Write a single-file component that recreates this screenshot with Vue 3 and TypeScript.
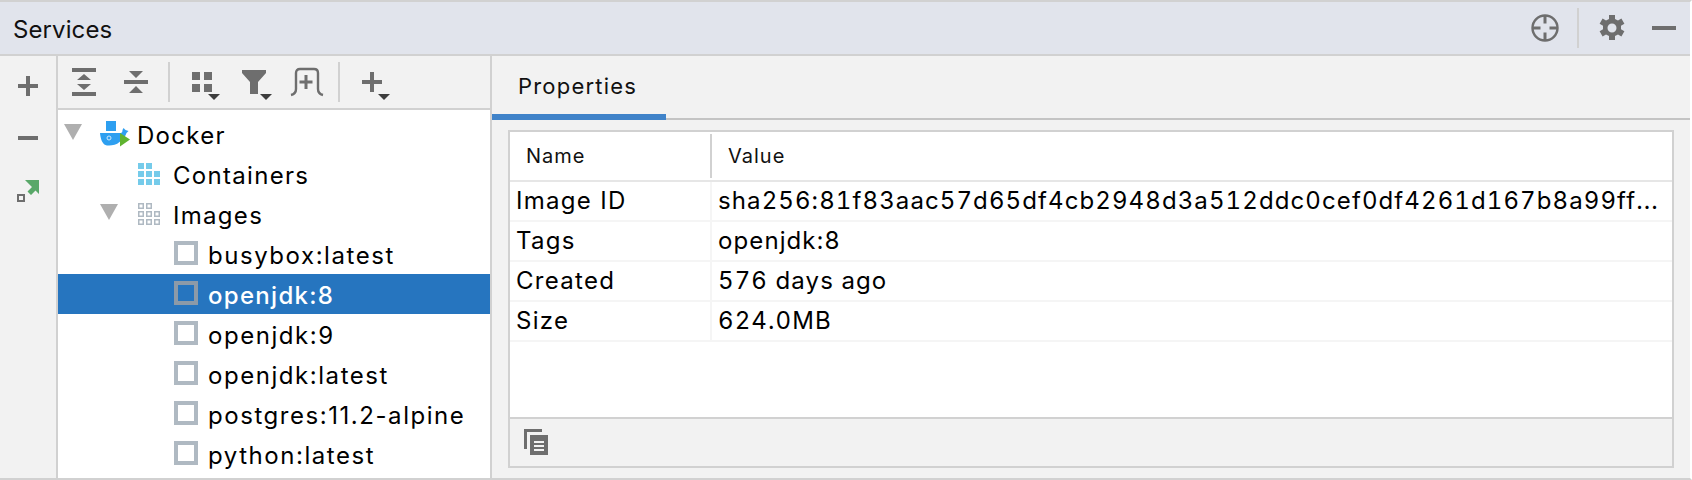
<script setup lang="ts">
const images = [
  { name: 'busybox:latest', selected: false },
  { name: 'openjdk:8', selected: true },
  { name: 'openjdk:9', selected: false },
  { name: 'openjdk:latest', selected: false },
  { name: 'postgres:11.2-alpine', selected: false },
  { name: 'python:latest', selected: false },
]
const props = [
  { k: 'Image ID', v: 'sha256:81f83aac57d65df4cb2948d3a512ddc0cef0df4261d167b8a99ff...' },
  { k: 'Tags', v: 'openjdk:8' },
  { k: 'Created', v: '576 days ago' },
  { k: 'Size', v: '624.0MB' },
]
const containerCells = [
  [0, 0], [8, 0], [0, 8], [8, 8], [16, 8], [0, 16], [8, 16], [16, 16],
]
</script>

<template>
  <div class="window">
    <header class="titlebar">
      <span class="title">Services</span>
      <div class="title-actions">
        <svg class="ta" width="28" height="28" viewBox="0 0 28 28">
          <circle cx="14" cy="14" r="12.5" fill="none" stroke="#6e6e6e" stroke-width="2.4" />
          <path d="M14 1.5v8M14 18.5v8M1.5 14h8M18.5 14h8" stroke="#6e6e6e" stroke-width="3" />
        </svg>
        <span class="title-sep"></span>
        <svg class="ta" width="26" height="28" viewBox="0 0 26 28">
          <path fill="#6e6e6e" fill-rule="evenodd" d="M10 1h6v4l3 1.6 3.4-2 3 5.2-3.4 2v3.4l3.4 2-3 5.2-3.4-2-3 1.6v4h-6v-4l-3-1.6-3.4 2-3-5.2 3.4-2v-3.4l-3.4-2 3-5.2 3.4 2 3-1.6zM13 9.500a4.500 4.500 0 1 0 0 9 4.500 4.500 0 0 0 0-9z" />
        </svg>
        <span class="min"></span>
      </div>
    </header>

    <div class="body">
      <aside class="rail">
        <svg width="20" height="20" viewBox="0 0 20 20"><path d="M8 0h4v8h8v4h-8v8H8v-8H0V8h8z" fill="#6e6e6e" /></svg>
        <svg width="20" height="4" viewBox="0 0 20 4"><rect width="20" height="4" fill="#6e6e6e" /></svg>
        <svg width="22" height="22" viewBox="0 0 22 22">
          <path d="M8 0h14v14l-3.500-3.500-4.500 4.500-3.500-3.500 4.500-4.500z" fill="#59a869" />
          <rect x="1" y="15" width="6" height="6" fill="none" stroke="#6e6e6e" stroke-width="2" />
        </svg>
      </aside>

      <section class="tree-pane">
        <div class="toolbar">
          <div class="tool-group first">
            <svg class="tool" width="32" height="40" viewBox="0 0 32 40">
              <g fill="#6e6e6e">
                <rect x="4" y="6" width="24" height="4" />
                <rect x="4" y="30" width="24" height="4" />
                <path d="M16 12l7 6H9zM16 28l-7-6h14z" />
              </g>
            </svg>
            <svg class="tool" width="32" height="40" viewBox="0 0 32 40">
              <g fill="#6e6e6e">
                <rect x="4" y="18" width="24" height="4" />
                <path d="M16 16l-7-7h14zM16 24l7 7H9z" />
              </g>
            </svg>
          </div>
          <span class="sep"></span>
          <div class="tool-group second">
            <svg class="tool" width="36" height="40" viewBox="0 0 36 40">
              <g fill="#6e6e6e">
                <rect x="4" y="10" width="8" height="8" /><rect x="16" y="10" width="8" height="8" />
                <rect x="4" y="22" width="8" height="8" /><rect x="16" y="22" width="8" height="8" />
              </g>
              <path d="M20 32h12l-6 6z" fill="#3d3d3d" />
            </svg>
            <svg class="tool" width="36" height="40" viewBox="0 0 36 40">
              <path d="M4 8h24v3l-8 9v12h-8V20L4 11z" fill="#6e6e6e" />
              <path d="M22 32h12l-6 6z" fill="#3d3d3d" />
            </svg>
            <svg class="tool" width="34" height="40" viewBox="0 0 34 40">
              <path d="M1 33c4-1 5-3 5-6V11q0-4 4-4h14q4 0 4 4v16c0 3 1 5 5 6" fill="none" stroke="#6e6e6e" stroke-width="2.400" />
              <path d="M14.500 13h3v5.500h5v3h-5v5.500h-3v-5.500h-5v-3h5z" fill="#6e6e6e" />
            </svg>
          </div>
          <span class="sep"></span>
          <div class="tool-group third">
            <svg class="tool" width="34" height="40" viewBox="0 0 34 40">
              <path d="M12 10h4v8h8v4h-8v8h-4v-8H4v-4h8z" fill="#6e6e6e" />
              <path d="M20 32h12l-6 6z" fill="#3d3d3d" />
            </svg>
          </div>
        </div>

        <div class="tree">
          <div class="row docker">
            <span class="tri"></span>
            <svg class="whale" width="30" height="26" viewBox="0 0 30 26">
              <rect x="6" y="0" width="10" height="10" fill="#2e9ff0" />
              <path d="M0 12h20.500c1.500 0 2-1 2-3l1-2 2 2 3 1-2 2c-1 3-3 6-7 9-4 4-12 4-14 3-3-1-5-6-5.500-12z" fill="#2e9ff0" />
              <circle cx="9" cy="17" r="2" fill="none" stroke="#cfe8fb" stroke-width="1" />
              <path d="M20 12l10 6.500-10 7z" fill="#5fb32f" />
            </svg>
            <span class="lbl">Docker</span>
          </div>
          <div class="row containers">
            <svg width="22" height="22" viewBox="0 0 22 22">
              <rect v-for="([x, y], i) in containerCells" :key="i" :x="x" :y="y" width="6" height="6" fill="#75cbea" />
            </svg>
            <span class="lbl">Containers</span>
          </div>
          <div class="row images">
            <span class="tri"></span>
            <svg width="22" height="22" viewBox="0 0 22 22">
              <rect v-for="([x, y], i) in containerCells" :key="i" :x="x + 0.75" :y="y + 0.75" width="4.500" height="4.500" fill="none" stroke="#afb9c2" stroke-width="1.500" />
            </svg>
            <span class="lbl">Images</span>
          </div>
          <div v-for="img in images" :key="img.name" class="row leaf" :class="{ selected: img.selected }">
            <span class="box"></span>
            <span class="lbl">{{ img.name }}</span>
          </div>
        </div>
      </section>

      <section class="details">
        <div class="tabs">
          <div class="tab">Properties</div>
        </div>
        <div class="panel">
          <div class="thead">
            <div class="th name">Name</div>
            <div class="th value">Value</div>
          </div>
          <div class="tbody">
            <div v-for="p in props" :key="p.k" class="tr">
              <div class="td key">{{ p.k }}</div>
              <div class="td val">{{ p.v }}</div>
            </div>
          </div>
          <div class="panel-foot">
            <svg width="24" height="26" viewBox="0 0 24 26">
              <path d="M0 0h18v3H3v17H0z" fill="#6e6e6e" />
              <path fill="#6e6e6e" fill-rule="evenodd" d="M6 6h18v20H6zM10 12v2h10v-2zM10 16v2h10v-2zM10 20v2h10v-2z" />
            </svg>
          </div>
        </div>
      </section>
    </div>
  </div>
</template>

<style>
html, body { margin: 0; background: #f2f2f2; }
</style>

<style scoped>
.window {
  width: 1692px;
  height: 480px;
  box-sizing: border-box;
  display: flex;
  flex-direction: column;
  background: #f2f2f2;
  border-top: 2px solid #d1d1d1;
  border-bottom: 2px solid #d1d1d1;
  border-right: 2px solid #fff;
  font-family: Inter, "Liberation Sans", sans-serif;
  font-size: 24px;
  letter-spacing: 1.3px;
  color: #000;
  overflow: hidden;
}
.titlebar {
  height: 54px;
  flex: none;
  box-sizing: border-box;
  background: #e1e4ec;
  border-bottom: 2px solid #d1d1d1;
  display: flex;
  align-items: center;
  justify-content: space-between;
  padding: 0 14px 0 13px;
}
.title { font-size: 24px; color: #111; letter-spacing: 0.1px; padding-top: 2px; }
.title-actions { display: flex; align-items: center; }
.title-sep { width: 2px; height: 40px; background: #d1d1d1; margin: 0 20px 0 18px; }
.min { width: 24px; height: 4px; background: #6e6e6e; margin-left: 27px; }
.body { flex: 1; display: flex; min-height: 0; }
.rail {
  width: 56px;
  flex: none;
  box-sizing: content-box;
  border-right: 2px solid #d1d1d1;
  display: flex;
  flex-direction: column;
  align-items: center;
  padding-top: 20px;
}
.rail svg:nth-child(2) { margin-top: 40px; }
.rail svg:nth-child(3) { margin-top: 40px; }
.tree-pane {
  width: 432px;
  flex: none;
  border-right: 2px solid #d1d1d1;
  display: flex;
  flex-direction: column;
}
.toolbar {
  height: 54px;
  flex: none;
  box-sizing: border-box;
  border-bottom: 2px solid #d1d1d1;
  display: flex;
  align-items: center;
  padding-left: 10px;
}
.tool-group { display: flex; align-items: center; gap: 20px; }
.tool-group.first { padding-right: 16px; }
.tool-group.second { padding: 0 14px 0 18px; gap: 14px; }
.tool-group.second .tool:last-child { margin-left: 2px; }
.tool-group.third { padding-left: 18px; }
.sep { width: 2px; height: 40px; background: #d1d1d1; }
.tool { display: block; }
.tree { flex: 1; background: #fff; padding-top: 4px; }
.row { height: 40px; display: flex; align-items: center; }
.row.docker { padding-left: 6px; }
.row.docker .whale { margin: 0 7px 0 18px; }
.row.containers { padding-left: 80px; gap: 13px; }
.row.images { padding-left: 42px; }
.row.images svg { margin: 0 13px 0 20px; }
.row.leaf { padding-left: 116px; gap: 10px; letter-spacing: 1.55px; }
.row.selected { background: #2675bf; color: #fff; font-weight: 500; letter-spacing: 1.3px; }
.tri {
  width: 0;
  height: 0;
  border-left: 9px solid transparent;
  border-right: 9px solid transparent;
  border-top: 16px solid #afafaf;
  margin-top: -4px;
}
.box {
  width: 24px;
  height: 24px;
  box-sizing: border-box;
  border: 4px solid #afb9c2;
  margin-top: -2px;
}
.selected .box { border-color: #8c9aa8; }
.lbl { white-space: nowrap; padding-top: 2px; }
.details { flex: 1; display: flex; flex-direction: column; min-width: 0; }
.tabs {
  height: 64px;
  flex: none;
  box-sizing: border-box;
  border-bottom: 2px solid #c4c4c4;
  display: flex;
}
.tab {
  width: 174px;
  height: 64px;
  box-sizing: border-box;
  border-bottom: 6px solid #4083c9;
  padding: 15px 0 0 26px;
  font-size: 22px;
  line-height: 30px;
  letter-spacing: 1.2px;
  color: #111;
}
.panel {
  margin: 10px 16px 10px 16px;
  flex: 1;
  box-sizing: border-box;
  border: 2px solid #d1d1d1;
  display: flex;
  flex-direction: column;
  min-height: 0;
}
.thead {
  height: 50px;
  flex: none;
  box-sizing: border-box;
  background: #fff;
  border-bottom: 2px solid #e6e6e6;
  display: flex;
  align-items: center;
}
.th { font-size: 20px; color: #111; letter-spacing: 1px; }
.th.name { width: 202px; flex: none; box-sizing: border-box; padding-left: 16px; height: 44px; line-height: 44px; border-right: 2px solid #d1d1d1; }
.th.value { padding-left: 16px; }
.tbody { flex: 1; background: #fff; }
.tr {
  height: 40px;
  box-sizing: border-box;
  border-bottom: 2px solid #f5f5f5;
  display: flex;
  align-items: center;
}
.td { white-space: nowrap; height: 38px; line-height: 38px; }
.td.key { width: 202px; flex: none; box-sizing: border-box; padding-left: 6px; border-right: 2px solid #f5f5f5; }
.td.val { padding-left: 6px; font-feature-settings: "tnum"; letter-spacing: 1.1px; }
.panel-foot {
  height: 49px;
  flex: none;
  box-sizing: border-box;
  border-top: 2px solid #d1d1d1;
  padding: 10px 0 0 14px;
  background: #f2f2f2;
}
.panel-foot svg { display: block; }
</style>
